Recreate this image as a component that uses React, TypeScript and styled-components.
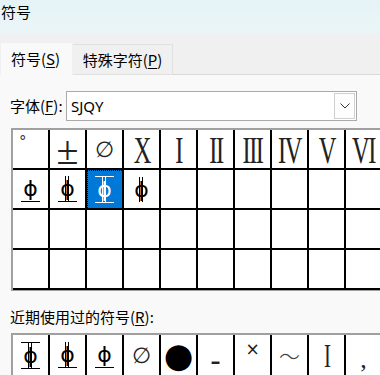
import React from "react";
import styled, { createGlobalStyle, css } from "styled-components";

const GlobalStyle = createGlobalStyle`
  html, body {
    margin: 0;
    padding: 0;
    background: #f0f0f0;
    overflow: hidden;
    font-family: "Noto Sans CJK SC", "Noto Sans", sans-serif;
    color: #000;
  }
`;

type Deco = "under" | "over-under" | "none";

interface SymbolItem {
  ch: string;
  kind?: "roman" | "phi" | "plain" | "degree" | "dot" | "wave";
  deco?: Deco;
  double?: boolean;
  size?: number;
  dy?: number;
  font?: string;
  bold?: boolean;
}

const gridRows: (SymbolItem | null)[][] = [
  [
    { ch: "°", kind: "degree" },
    { ch: "±", kind: "plain", size: 40, font: "Liberation Serif", dy: 2 },
    { ch: "∅", kind: "plain", size: 22, dy: 1 },
    { ch: "X", kind: "roman" },
    { ch: "I", kind: "roman" },
    { ch: "II", kind: "roman" },
    { ch: "III", kind: "roman" },
    { ch: "IV", kind: "roman" },
    { ch: "V", kind: "roman" },
    { ch: "VI", kind: "roman" },
  ],
  [
    { ch: "ϕ", kind: "phi", deco: "under" },
    { ch: "ϕ", kind: "phi", deco: "under", double: true },
    { ch: "ϕ", kind: "phi", deco: "over-under", double: true },
    { ch: "ϕ", kind: "phi", double: true },
    null,
    null,
    null,
    null,
    null,
    null,
  ],
  Array(10).fill(null),
  Array(10).fill(null),
];

const recent: SymbolItem[] = [
  { ch: "ϕ", kind: "phi", deco: "over-under", double: true },
  { ch: "ϕ", kind: "phi", deco: "under", double: true },
  { ch: "ϕ", kind: "phi", deco: "under" },
  { ch: "∅", kind: "plain", size: 22, dy: 1 },
  { ch: "●", kind: "dot" },
  { ch: "–", kind: "plain", size: 20, dy: 6, font: "DejaVu Sans", bold: true },
  { ch: "×", kind: "plain", size: 17, dy: -6, font: "DejaVu Sans" },
  { ch: "〜", kind: "wave" },
  { ch: "I", kind: "roman", size: 28 },
  { ch: ",", kind: "plain", size: 26, dy: 5, font: "Liberation Serif" },
];

const Glyph: React.FC<{ item: SymbolItem; selected?: boolean }> = ({
  item,
  selected,
}) => {
  switch (item.kind) {
    case "roman":
      return <Roman $size={item.size ?? 33}>{item.ch}</Roman>;
    case "degree":
      return <Degree>{item.ch}</Degree>;
    case "dot":
      return <Dot>{item.ch}</Dot>;
    case "wave":
      return <Wave>{item.ch}</Wave>;
    case "phi":
      return (
        <Phi $deco={item.deco ?? "none"} $selected={!!selected}>
          {item.ch}
          {item.double && <DoubleBar $selected={!!selected} />}
        </Phi>
      );
    default:
      return (
        <Plain
          $size={item.size ?? 22}
          $dy={item.dy ?? 0}
          $font={item.font ?? "DejaVu Sans"}
          $bold={!!item.bold}
        >
          {item.ch}
        </Plain>
      );
  }
};

export default function App() {
  return (
    <Window>
      <GlobalStyle />
      <TitleBar>符号</TitleBar>
      <TabStrip>
        <Tab $active>
          符号(<u>S</u>)
        </Tab>
        <Tab>
          特殊字符(<u>P</u>)
        </Tab>
      </TabStrip>
      <Panel>
        <FontRow>
          <FieldLabel>
            字体(<u>F</u>):
          </FieldLabel>
          <Combo>
            <ComboText>SJQY</ComboText>
            <ComboButton>
              <svg width="10" height="6" viewBox="0 0 10 6">
                <path d="M0.5 0.5 L5 5 L9.5 0.5" fill="none" stroke="#333" strokeWidth="1" />
              </svg>
            </ComboButton>
          </Combo>
        </FontRow>
        <SymbolGrid>
          {gridRows.flatMap((row, r) =>
            row.map((item, c) => {
              const selected = r === 1 && c === 2;
              return (
                <Cell key={`${r}-${c}`} $selected={selected}>
                  {item && <Glyph item={item} selected={selected} />}
                </Cell>
              );
            })
          )}
        </SymbolGrid>
        <RecentLabel>
          近期使用过的符号(<u>R</u>):
        </RecentLabel>
        <RecentRow>
          {recent.map((item, i) => (
            <RecentCell key={i}>
              <Glyph item={item} />
            </RecentCell>
          ))}
        </RecentRow>
      </Panel>
    </Window>
  );
}

const Window = styled.div`
  width: 380px;
  height: 375px;
  overflow: hidden;
  background: #f0f0f0;
`;

const TitleBar = styled.div`
  height: 33px;
  box-sizing: border-box;
  padding: 2px 0 0 1px;
  font-size: 15px;
  line-height: 20px;
  background: linear-gradient(180deg, #e6f3f6 0%, #eaf5f7 100%);
`;

const TabStrip = styled.div`
  height: 42px;
  display: flex;
  align-items: flex-end;
  border-bottom: 1px solid #d9d9d9;
  box-sizing: border-box;
`;

const Tab = styled.div<{ $active?: boolean }>`
  box-sizing: border-box;
  font-size: 15px;
  line-height: 20px;
  display: flex;
  align-items: center;
  justify-content: center;
  margin-bottom: -1px;
  ${(p) =>
    p.$active
      ? css`
          width: 73px;
          height: 33px;
          background: #f9f9f9;
          border: 1px solid #f0f0f0;
          border-bottom: none;
          padding-right: 2px;
        `
      : css`
          width: 100px;
          height: 31px;
          background: #f0f0f0;
          border: 1px solid #e0e0e0;
          border-left: none;
        `}

  u {
    text-underline-offset: 2px;
  }
`;

const Panel = styled.div`
  background: #f9f9f9;
  height: 300px;
  padding-left: 11px;
  box-sizing: border-box;
`;

const FontRow = styled.div`
  display: flex;
  align-items: center;
  padding-top: 15px;
  height: 31px;
  box-sizing: content-box;
`;

const FieldLabel = styled.span`
  font-size: 15px;
  width: 56px;
  white-space: nowrap;
  margin-left: -1px;
  u {
    text-underline-offset: 2px;
  }
`;

const Combo = styled.div`
  width: 291px;
  height: 30px;
  box-sizing: border-box;
  border: 1px solid #aaaaaa;
  background: #fff;
  display: flex;
  align-items: center;
  justify-content: space-between;
  padding: 0 1px 0 4px;
`;

const ComboText = styled.span`
  font-family: "Noto Sans", sans-serif;
  font-size: 15px;
`;

const ComboButton = styled.div`
  width: 21px;
  height: 26px;
  box-sizing: border-box;
  border: 1px solid #d0d0d0;
  background: #fdfdfd;
  display: flex;
  align-items: center;
  justify-content: center;
`;

const SymbolGrid = styled.div`
  margin-top: 7px;
  width: max-content;
  display: grid;
  grid-template-columns: repeat(10, 37px);
  grid-auto-rows: 40px;
  border-left: 2px solid #a0a0a0;
  border-top: 2px solid #a0a0a0;
  border-bottom: 1px solid #a0a0a0;
  background: #fff;
`;

const cellBase = css`
  box-sizing: border-box;
  border-right: 2px solid #000;
  display: flex;
  align-items: center;
  justify-content: center;
  position: relative;
`;

const Cell = styled.div<{ $selected?: boolean }>`
  ${cellBase}
  border-bottom: 2px solid #000;
  background: ${(p) => (p.$selected ? "#0078d7" : "#fff")};
  color: ${(p) => (p.$selected ? "#fff" : "#000")};
  ${(p) =>
    p.$selected &&
    css`
      outline: 1px dotted #000;
      outline-offset: -1px;
    `}
`;

const RecentLabel = styled.div`
  font-size: 15px;
  line-height: 20px;
  margin-top: 16px;
  margin-left: -1px;
  u {
    text-underline-offset: 2px;
  }
`;

const RecentRow = styled.div`
  margin-top: 6px;
  width: max-content;
  display: grid;
  grid-template-columns: repeat(10, 37px);
  grid-auto-rows: 40px;
  border: 2px solid #a0a0a0;
  border-right: none;
  background: #fff;
`;

const RecentCell = styled.div`
  ${cellBase}
`;

const Roman = styled.span<{ $size: number }>`
  font-family: "Liberation Serif", serif;
  font-size: ${(p) => p.$size}px;
  line-height: 1;
  display: inline-block;
  transform: scale(0.74, 1.18);
  color: #222;
  white-space: nowrap;
  letter-spacing: -2px;
  margin-top: 2px;
`;

const Degree = styled.span`
  font-family: "DejaVu Sans", sans-serif;
  font-size: 15px;
  position: absolute;
  left: 6px;
  top: 3px;
  color: #333;
`;

const Dot = styled.span`
  font-family: "DejaVu Sans", sans-serif;
  font-size: 34px;
  line-height: 1;
`;

const Wave = styled.span`
  font-family: "Noto Sans CJK SC", sans-serif;
  font-size: 21px;
  line-height: 22px;
  color: #444;
  font-weight: 300;
`;

const Plain = styled.span<{ $size: number; $dy: number; $font: string; $bold: boolean }>`
  font-family: "${(p) => p.$font}", serif;
  font-size: ${(p) => p.$size}px;
  font-weight: ${(p) => (p.$bold ? 700 : 400)};
  line-height: 1;
  color: #222;
  transform: translateY(${(p) => p.$dy}px);
`;

const Phi = styled.span<{ $deco: Deco; $selected: boolean }>`
  position: relative;
  font-family: "DejaVu Sans", sans-serif;
  font-size: 22px;
  line-height: 25px;
  padding: 0 2px;
  border-bottom: ${(p) =>
    p.$deco === "none" ? "none" : `1.5px solid ${p.$selected ? "#fff" : "#000"}`};
  border-top: ${(p) =>
    p.$deco === "over-under" ? `1.5px solid ${p.$selected ? "#fff" : "#000"}` : "none"};
`;

const DoubleBar = styled.span<{ $selected: boolean }>`
  position: absolute;
  left: 50%;
  top: 0;
  bottom: 0;
  width: 4px;
  margin-left: -2px;
  box-sizing: border-box;
  border-left: 1px solid ${(p) => (p.$selected ? "#fff" : "#000")};
  border-right: 1px solid ${(p) => (p.$selected ? "#fff" : "#000")};
`;
